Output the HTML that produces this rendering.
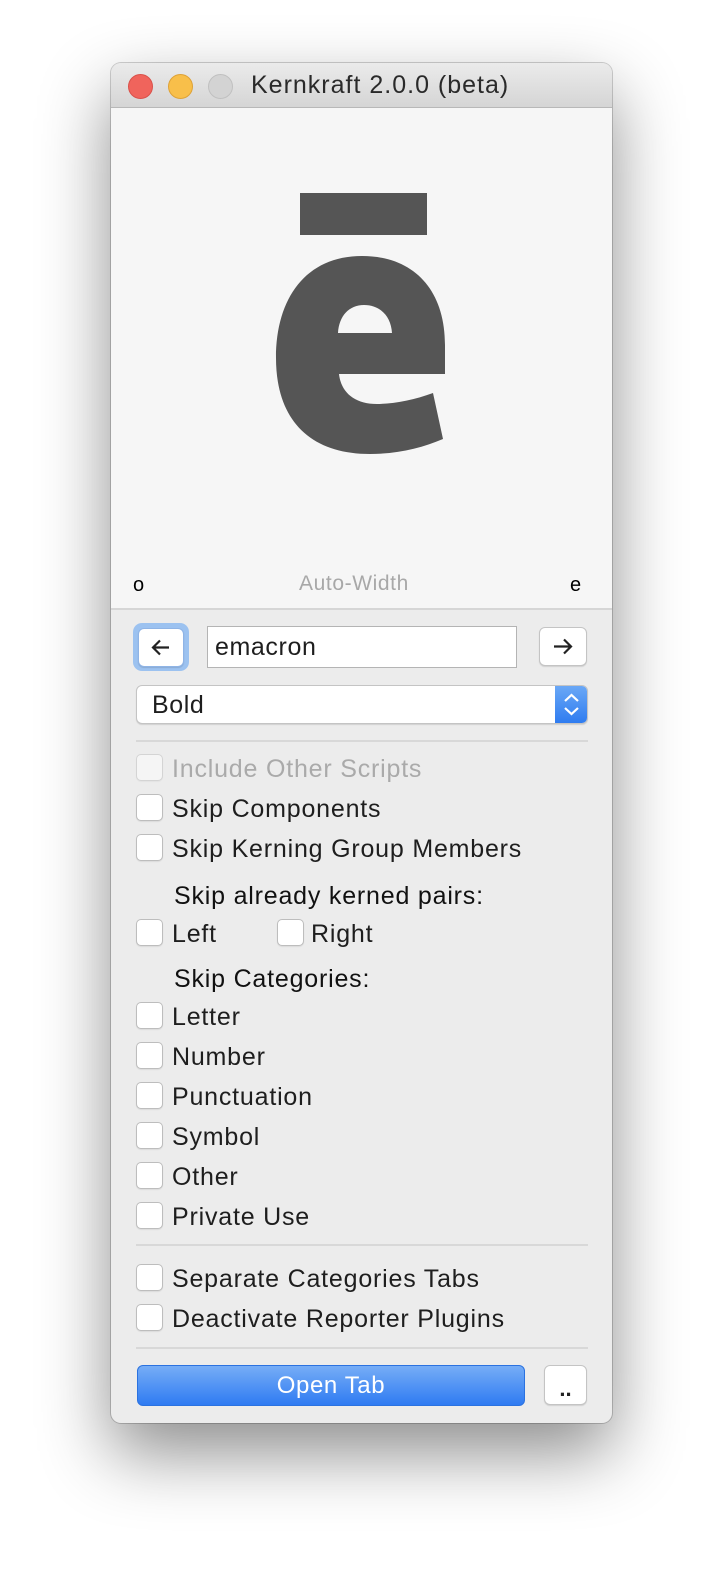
<!DOCTYPE html>
<html><head><style>
body{margin:0;width:724px;height:1584px;background:#fff;position:relative;overflow:hidden;font-family:"Liberation Sans",sans-serif;}
.win{position:absolute;left:111px;top:63px;width:501px;height:1360px;border-radius:10px;background:#ececec;box-shadow:0 30px 70px rgba(0,0,0,0.45),0 0 0 1px rgba(0,0,0,0.18);overflow:hidden;}
.title{position:absolute;left:0;top:0;width:100%;height:44px;background:linear-gradient(#ebebeb,#d5d5d5);border-bottom:1px solid #b8b8b8;}
.tl{position:absolute;top:11px;width:23px;height:23px;border-radius:50%;}
.ttext{position:absolute;left:140px;top:8px;font-size:25px;letter-spacing:1px;color:#2a2a2a;}
.prev{position:absolute;left:0;top:45px;width:100%;height:500px;background:#f6f6f6;border-bottom:2px solid #d6d6d6;}
.a{position:absolute;}
.cb{position:absolute;left:25px;width:25px;height:25px;background:#fff;border:1px solid #bdbdbd;border-radius:5px;box-shadow:0 1px 1px rgba(0,0,0,0.08);}
.lb{position:absolute;left:61px;font-size:25px;letter-spacing:0.8px;color:#1e1e1e;line-height:28px;}
.sep{position:absolute;left:25px;width:452px;height:2px;background:#d8d8d8;}
.btn{position:absolute;background:#fff;border:1px solid #c4c4c4;border-radius:6px;box-shadow:0 1px 1px rgba(0,0,0,0.12);}
</style></head><body>
<div class="win">
 <div class="title">
  <div class="tl" style="left:17px;background:#f0645c;border:1px solid #d9514a"></div>
  <div class="tl" style="left:57px;background:#f8bf4a;border:1px solid #dea236"></div>
  <div class="tl" style="left:97px;background:#d3d3d3;border:1px solid #c0c0c0"></div>
  <div class="ttext">Kernkraft 2.0.0 (beta)</div>
 </div>
 <div class="prev">
  <svg class="a" style="left:-111px;top:-108px" width="724" height="700">
   <rect x="300" y="193" width="127" height="42" fill="#555"/>
   <path fill="#555" fill-rule="evenodd" d="M445,374 L445,345 C445,288 412,256 362,256 C306,256 276,298 276,358 C276,420 310,454 370,454 C397,454 422,448 443,439 L433,393 C414,400 394,404 377,404 C354,404 341,392 339,374 Z M338,333 C339,316 349,305 364,305 C380,305 391,316 392,333 Z"/>
  </svg>
  <div class="a" style="left:22px;top:466px;font-size:20px;color:#000">o</div>
  <div class="a" style="left:188px;top:464px;font-size:21px;letter-spacing:0.6px;color:#a8a8a8">Auto-Width</div>
  <div class="a" style="left:459px;top:466px;font-size:20px;color:#000">e</div>
 </div>
 <div class="a" style="left:22px;top:560px;width:56px;height:48px;border-radius:9px;background:#9cc2f0"></div>
 <div class="btn" style="left:27px;top:565px;width:44px;height:37px;border-radius:6px;border-color:#8fb4e6"></div>
 <svg class="a" style="left:27px;top:565px" width="46" height="39"><path d="M15,19.5 H31 M22,12.5 L15,19.5 L22,26.5" stroke="#222" stroke-width="2.2" fill="none"/></svg>
 <div class="a" style="left:96px;top:563px;width:308px;height:40px;background:#fff;border:1px solid #b4b4b4"></div>
 <div class="a" style="left:104px;top:563px;font-size:25px;line-height:42px;letter-spacing:0.6px;color:#1e1e1e">emacron</div>
 <div class="btn" style="left:428px;top:564px;width:46px;height:37px"></div>
 <svg class="a" style="left:428px;top:564px" width="48" height="39"><path d="M15,19.5 H32 M25,12.5 L32,19.5 L25,26.5" stroke="#222" stroke-width="2.2" fill="none"/></svg>
 <div class="btn" style="left:25px;top:622px;width:450px;height:37px;overflow:hidden">
  <div class="a" style="left:418px;top:0;width:33px;height:37px;background:linear-gradient(#6aa8f6,#2f7cf0)"></div>
  <svg class="a" style="left:418px;top:0" width="33" height="37"><path d="M10,15 L16.5,9 L23,15 M10,22 L16.5,28 L23,22" stroke="#fff" stroke-width="2.2" fill="none"/></svg>
 </div>
 <div class="a" style="left:41px;top:622px;font-size:25px;letter-spacing:0.6px;color:#1e1e1e;line-height:40px">Bold</div>
 <div class="sep" style="top:677px"></div>
 <div class="cb" style="top:691px;opacity:0.5"></div><div class="lb" style="top:692px;color:#aaa">Include Other Scripts</div>
 <div class="cb" style="top:731px"></div><div class="lb" style="top:732px">Skip Components</div>
 <div class="cb" style="top:771px"></div><div class="lb" style="top:772px">Skip Kerning Group Members</div>
 <div class="lb" style="top:819px;left:63px;color:#111">Skip already kerned pairs:</div>
 <div class="cb" style="top:856px"></div><div class="lb" style="top:857px">Left</div>
 <div class="cb" style="top:856px;left:166px"></div><div class="lb" style="top:857px;left:200px">Right</div>
 <div class="lb" style="top:902px;left:63px;color:#111">Skip Categories:</div>
 <div class="cb" style="top:939px"></div><div class="lb" style="top:940px">Letter</div>
 <div class="cb" style="top:979px"></div><div class="lb" style="top:980px">Number</div>
 <div class="cb" style="top:1019px"></div><div class="lb" style="top:1020px">Punctuation</div>
 <div class="cb" style="top:1059px"></div><div class="lb" style="top:1060px">Symbol</div>
 <div class="cb" style="top:1099px"></div><div class="lb" style="top:1100px">Other</div>
 <div class="cb" style="top:1139px"></div><div class="lb" style="top:1140px">Private Use</div>
 <div class="sep" style="top:1181px"></div>
 <div class="cb" style="top:1201px"></div><div class="lb" style="top:1202px">Separate Categories Tabs</div>
 <div class="cb" style="top:1241px"></div><div class="lb" style="top:1242px">Deactivate Reporter Plugins</div>
 <div class="sep" style="top:1284px"></div>
 <div class="a" style="left:26px;top:1302px;width:386px;height:39px;border-radius:6px;background:linear-gradient(#76adf6,#2f7bf2);border:1px solid #2b72e0;color:#fff;font-size:24px;letter-spacing:0.6px;text-align:center;line-height:40px">Open Tab</div>
 <div class="btn" style="left:433px;top:1302px;width:41px;height:38px;text-align:center;font-size:22px;font-weight:bold;line-height:46px;color:#222">..</div>
</div>
</body></html>
